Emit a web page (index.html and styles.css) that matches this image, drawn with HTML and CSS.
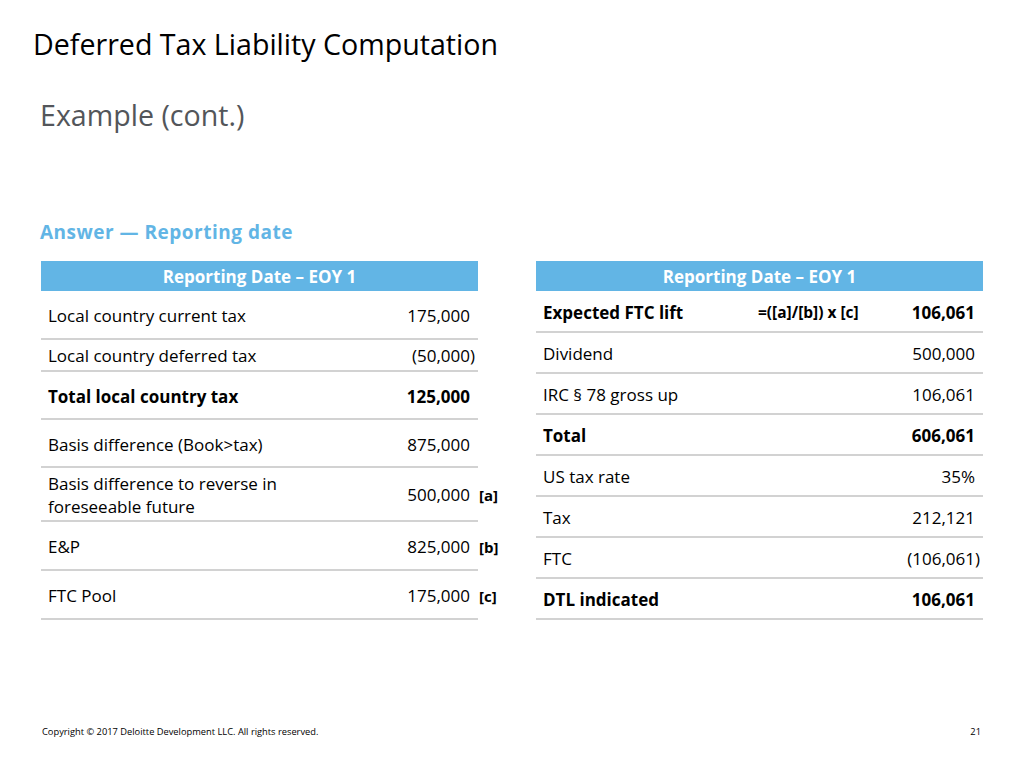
FILE: index.html
```html
<!DOCTYPE html>
<html lang="en">
<head>
<meta charset="utf-8">
<title>Deferred Tax Liability Computation</title>
<link rel="stylesheet" href="styles.css">
</head>
<body>
<div class="slide">
  <h1 class="title">Deferred Tax Liability Computation</h1>
  <h2 class="subtitle">Example (cont.)</h2>
  <h3 class="answer">Answer — Reporting date</h3>

  <div class="tables">
    <div class="table table--left">
      <div class="thead">Reporting Date – EOY 1</div>
      <div class="row r49"><span class="label">Local country current tax</span><span class="val">175,000</span></div>
      <div class="row r32"><span class="label">Local country deferred tax</span><span class="val">(50,000<span class="paren">)</span></span></div>
      <div class="row r48 bold"><span class="label">Total local country tax</span><span class="val">125,000</span></div>
      <div class="row r48"><span class="label">Basis difference (Book&gt;tax)</span><span class="val">875,000</span></div>
      <div class="row r54"><span class="label">Basis difference to reverse in foreseeable future</span><span class="val">500,000<span class="tag">[a]</span></span></div>
      <div class="row r49"><span class="label">E&amp;P</span><span class="val">825,000<span class="tag">[b]</span></span></div>
      <div class="row r49"><span class="label">FTC Pool</span><span class="val">175,000<span class="tag">[c]</span></span></div>
    </div>

    <div class="table table--right">
      <div class="thead">Reporting Date – EOY 1</div>
      <div class="row r42 bold"><span class="label">Expected FTC lift</span><span class="formula">=([a]/[b]) x [c]</span><span class="val">106,061</span></div>
      <div class="row r41"><span class="label">Dividend</span><span class="formula"></span><span class="val">500,000</span></div>
      <div class="row r41"><span class="label">IRC § 78 gross up</span><span class="formula"></span><span class="val">106,061</span></div>
      <div class="row r41 bold"><span class="label">Total</span><span class="formula"></span><span class="val">606,061</span></div>
      <div class="row r41"><span class="label">US tax rate</span><span class="formula"></span><span class="val">35%</span></div>
      <div class="row r41"><span class="label">Tax</span><span class="formula"></span><span class="val">212,121</span></div>
      <div class="row r41"><span class="label">FTC</span><span class="formula"></span><span class="val">(106,061<span class="paren">)</span></span></div>
      <div class="row r41 bold"><span class="label">DTL indicated</span><span class="formula"></span><span class="val">106,061</span></div>
    </div>
  </div>

  <footer class="footer">
    <span class="copy">Copyright © 2017 Deloitte Development LLC. All rights reserved.</span>
    <span class="page">21</span>
  </footer>
</div>
</body>
</html>
```

FILE: styles.css
```css
* { box-sizing: border-box; }

html, body {
  margin: 0;
  padding: 0;
  background: #ffffff;
}

body {
  font-family: "Open Sans", "Liberation Sans", sans-serif;
  color: #000000;
}

.slide {
  width: 1024px;
  height: 768px;
  display: flex;
  flex-direction: column;
  padding-top: 27px;
}

.title {
  margin: 0 0 0 33px;
  font-size: 28.6px;
  line-height: 34px;
  font-weight: 400;
  color: #000000;
}

.subtitle {
  margin: 37px 0 0 40px;
  font-size: 28.6px;
  line-height: 34px;
  font-weight: 400;
  color: #53565a;
}

.answer {
  margin: 88px 0 0 40px;
  font-size: 19px;
  letter-spacing: 0.5px;
  line-height: 24px;
  font-weight: 700;
  color: #62b5e5;
}

.tables {
  display: flex;
  align-items: flex-start;
  gap: 58px;
  margin: 17px 0 0 41px;
}

.table {
  display: flex;
  flex-direction: column;
}

.table--left { width: 437px; }
.table--right { width: 447px; }

.thead {
  height: 30px;
  padding-top: 2px;
  background: #62b5e5;
  color: #ffffff;
  font-weight: 700;
  font-size: 17px;
  line-height: 28px;
  text-align: center;
}

.row {
  display: grid;
  align-items: center;
  border-bottom: 2px solid #d2d2d2;
  padding: 2px 8px 0 7px;
  font-size: 17px;
  line-height: 23px;
}

.table--left .row { grid-template-columns: 260px 1fr; }
.table--right .row { grid-template-columns: 215px 1fr auto; }

.r32 { height: 32px; padding-top: 0; }
.r41 { height: 41px; }
.r42 { height: 42px; }
.r48 { height: 48px; }
.r49 { height: 49px; }
.r54 { height: 54px; }

.bold { font-weight: 700; }

.val {
  text-align: right;
  white-space: nowrap;
}

.paren { margin-right: -5px; }

.tag {
  display: inline-block;
  width: 0;
  padding-left: 9px;
  margin-right: -9px;
  font-size: 15px;
  font-weight: 700;
  white-space: nowrap;
}

.formula {
  font-size: 15.5px;
  font-weight: 700;
  white-space: nowrap;
}

.footer {
  margin-top: auto;
  display: flex;
  justify-content: space-between;
  padding: 0 43px 30px 42px;
  font-size: 9.3px;
  line-height: 12px;
  color: #000000;
}
```
